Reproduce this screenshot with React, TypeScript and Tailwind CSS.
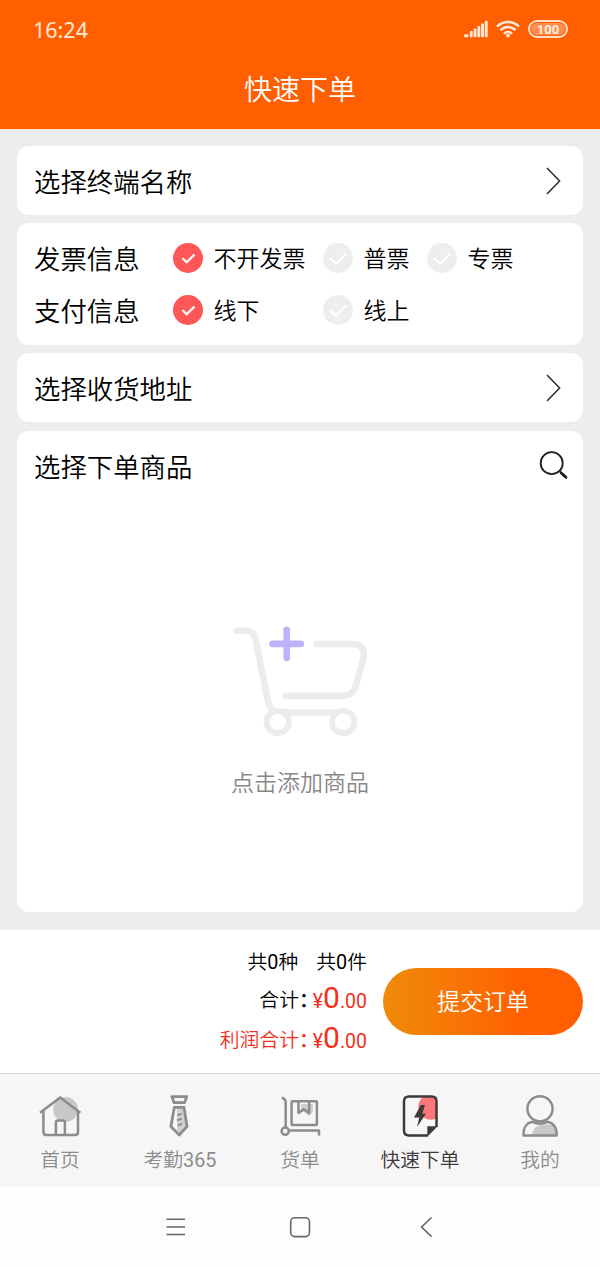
import React from 'react';

const CheckDot: React.FC<{ checked?: boolean }> = ({ checked }) => (
  <svg width="30" height="30" viewBox="0 0 30 30" fill="none" className="shrink-0">
    <circle cx="15" cy="15" r="15" fill={checked ? '#ff5757' : '#eeeeee'} />
    <path d={checked ? 'M9.4 15 L13.6 19.2 L21.4 11.6' : 'M6.8 15.2 L13 20.6 L23.2 10.4'} stroke="#fff" strokeWidth={checked ? 2.2 : 2} />
  </svg>
);

const Option: React.FC<{ label: string; checked?: boolean; className?: string }> = ({ label, checked, className }) => (
  <div className={`flex items-center gap-[10.6px] ${className ?? ''}`}>
    <CheckDot checked={checked} />
    <span className="pt-[3px] text-[23px] leading-none whitespace-nowrap">{label}</span>
  </div>
);

const ChevronRight: React.FC = () => (
  <svg width="16" height="28" viewBox="0 0 16 28" fill="none" stroke="#333" strokeWidth="1.6">
    <path d="M1 1 L13.6 14 L1 27" />
  </svg>
);

const SelectRow: React.FC<{ label: string }> = ({ label }) => (
  <div className="flex h-[69px] shrink-0 items-center justify-between rounded-xl bg-white pr-[21px] pl-[17px]">
    <span className="pt-[6px] text-[26.4px] leading-none">{label}</span>
    <ChevronRight />
  </div>
);

const StatusBar: React.FC = () => (
  <div className="flex h-[58px] items-center justify-between pr-8 pl-[33px] text-[#ffe9d6]">
    <span className="pt-[2px] font-['Noto_Sans'] text-[21.5px] leading-none font-normal">16:24</span>
    <div className="flex items-center gap-2">
      <svg width="24" height="18" viewBox="0 0 24 18" fill="currentColor">
        <rect x="0" y="14.2" width="4.4" height="3" rx="1" />
        <rect x="5.8" y="11" width="2.9" height="6.2" rx="1" />
        <rect x="9.6" y="8.4" width="2.9" height="8.8" rx="1" />
        <rect x="13.4" y="6" width="2.9" height="11.2" rx="1" />
        <rect x="17.1" y="3.4" width="2.9" height="13.8" rx="1" />
        <rect x="20.8" y="0.8" width="2.9" height="16.4" rx="1" />
      </svg>
      <svg width="24" height="18" viewBox="0 0 24 18" fill="none" stroke="currentColor" strokeWidth="2.5">
        <path d="M1 6.6 C7.2 .4 16.8 .4 23 6.6" />
        <path d="M4.4 10.2 C8.7 6 15.3 6 19.6 10.2" />
        <path d="M7.9 13.6 C10.2 11.4 13.8 11.4 16.1 13.6" />
        <circle cx="12" cy="15.6" r="2" fill="currentColor" stroke="none" />
      </svg>
      <div className="flex h-[18px] w-10 items-center justify-center rounded-full border-2 border-[#ffe0c4] p-px">
        <div className="flex h-full w-full items-center justify-center rounded-full bg-[#ff8c4d] font-['Roboto'] text-[13px] leading-none font-bold text-[#fff3e8]">
          100
        </div>
      </div>
    </div>
  </div>
);

const CartIcon: React.FC = () => (
  <svg width="140" height="116" viewBox="0 0 140 116" fill="none" stroke="#ececec" strokeWidth="6.6" strokeLinecap="round" strokeLinejoin="round">
    <path d="M6.8 8.7 H15 C22 8.7 24.3 12 25.4 17 L37.5 77 C39.3 86 42 90.5 48 90.5 H113" />
    <path d="M86.5 22 H122 C132 22 135.2 27.5 133.3 36 L127 60 C124.4 70 121 73.9 112 73.9 H56" />
    <circle cx="47.8" cy="100" r="11.2" fill="#fff" strokeWidth="5.8" />
    <circle cx="113.3" cy="100" r="11.2" fill="#fff" strokeWidth="5.8" />
    <path d="M42.5 21.9 H70.8 M56.7 7.7 V36" stroke="#bfb2fb" />
  </svg>
);

const HomeIcon = (
  <>
    <circle cx="29.6" cy="17.5" r="12.5" fill="#c8c8c8" stroke="none" />
    <path d="M4 20.8 L24.2 5.4 L44.3 20.8" />
    <path d="M7.4 19 V40 Q7.4 43 10.4 43 H39 Q42 43 42 40 V19" />
    <path d="M19.9 43 V30.5 Q19.9 28.6 22 28.6 H26.6 Q28.9 28.6 28.9 30.5 V43" />
  </>
);

const TieIcon = (
  <>
    <path d="M21 16 H27.5 L30.5 34.5 L24 42 L21 38 Z" fill="#d0d0d0" stroke="none" />
    <path d="M15.9 4.6 H30.7 L28.6 10.6 H18 Z" strokeWidth="2.8" />
    <path d="M18.3 15.4 H28 L31 34.6 L23.2 43 L14.9 34.6 Z" strokeWidth="2.8" />
    <path d="M21.2 23.4 L25.6 21.8 M20.9 28.4 L25.6 26.8 M22 33.4 L26 32" strokeWidth="2" />
  </>
);

const DollyIcon = (
  <>
    <path d="M25 12 H37 V20 L33 24 L25 18 Z" fill="#d0d0d0" stroke="none" />
    <path d="M5.8 5.8 C8.8 6.5 9.7 8 9.7 11 V35.5" />
    <circle cx="9.2" cy="39.2" r="3.6" />
    <path d="M13 38.6 H43 V43.5" />
    <rect x="15.6" y="9.3" width="25.3" height="23.8" rx="1" />
    <path d="M22.5 9.5 V21 L27.8 17.3 L33.2 21 V9.5" />
  </>
);

const OrderIcon = (
  <>
    <clipPath id="sheet">
      <rect x="8" y="4.3" width="32.3" height="39.4" rx="5" />
    </clipPath>
    <circle cx="35" cy="15" r="12.7" fill="#fd7778" stroke="none" clipPath="url(#sheet)" />
    <path d="M32 43.6 H13 Q8 43.6 8 38.6 V9.4 Q8 4.4 13 4.4 H35.5 Q40.5 4.4 40.5 9.4 V35" />
    <path d="M31.3 44.8 V34.3 H41.7 Z" fill="currentColor" stroke="none" />
    <path d="M24.8 13 H29 L26.3 21.7 H30 L21 35 L23.3 25.5 H18 Z" fill="currentColor" stroke="none" />
  </>
);

const UserIcon = (
  <>
    <path d="M16 43.5 C16 35 24 31 37 33 Q40 37 40.5 43.5 Z" fill="#c8c8c8" stroke="none" />
    <circle cx="24" cy="16.8" r="12.6" />
    <path d="M16.5 29.8 C10 31 7.5 35 7.5 43.4 H40.7 C40.7 35 38 31 31.5 29.8 C27 32 21 32 16.5 29.8 Z" />
  </>
);

const tabs = [
  { label: '首页', icon: HomeIcon },
  { label: '考勤', digits: '365', icon: TieIcon },
  { label: '货单', icon: DollyIcon },
  { label: '快速下单', icon: OrderIcon, active: true },
  { label: '我的', icon: UserIcon },
];

const TabBar: React.FC = () => (
  <nav className="flex h-[114px] shrink-0 border-t border-[#d9d9d9] bg-[#f6f6f6]">
    {tabs.map((tab) => (
      <div
        key={tab.label}
        className={`flex w-[120px] flex-col items-center pt-[18px] ${tab.active ? 'text-[#3d3a3b]' : 'text-[#8c8c8c]'}`}
      >
        <svg width="48" height="48" viewBox="0 0 48 48" fill="none" stroke="currentColor" strokeWidth="2.5" strokeLinejoin="round">
          {tab.icon}
        </svg>
        <span className="mt-[11px] text-[19.8px] leading-none whitespace-nowrap">
          {tab.label}
          {tab.digits && <span className="font-normal">{tab.digits}</span>}
        </span>
      </div>
    ))}
  </nav>
);

const Price: React.FC = () => (
  <span className="pb-[7px] font-['Roboto'] leading-none font-normal text-[#f4301c]">
    <span className="text-[19.5px]">¥</span>
    <span className="text-[30px]">0</span>
    <span className="text-[19.5px]">.00</span>
  </span>
);

const TotalRow: React.FC<{ label: string; className?: string }> = ({ label, className }) => (
  <div className={`flex items-center ${className ?? ''}`}>
    <span>{label}</span>
    <span className="mr-1 font-medium [font-feature-settings:'halt']">：</span>
    <Price />
  </div>
);

const App: React.FC = () => {
  return (
    <div className="flex h-[1267px] w-[600px] flex-col bg-[#ededed] font-['Roboto','Noto_Sans_CJK_SC',sans-serif] font-[350] text-black">
      <header className="h-[129px] shrink-0 bg-[#ff5f00]">
        <StatusBar />
        <h1 className="mt-[19px] text-center text-[28px] leading-none text-white">快速下单</h1>
      </header>
      <div className="h-px shrink-0 bg-[#ffe5d0]" />

      <main className="flex flex-1 flex-col px-[17px] pt-4">
        <SelectRow label="选择终端名称" />

        <section className="mt-2 flex h-[122px] shrink-0 flex-col rounded-xl bg-white pt-[9px] pl-[17px]">
          <div className="flex h-[52px] items-center">
            <span className="w-[139px] pt-[5px] text-[26.4px] leading-none">发票信息</span>
            <Option label="不开发票" checked className="w-[150px]" />
            <Option label="普票" className="w-[104px]" />
            <Option label="专票" />
          </div>
          <div className="flex h-[52px] items-center">
            <span className="w-[139px] pt-[5px] text-[26.4px] leading-none">支付信息</span>
            <Option label="线下" checked className="w-[150px]" />
            <Option label="线上" />
          </div>
        </section>

        <div className="mt-2 flex flex-col">
          <SelectRow label="选择收货地址" />
        </div>

        <section className="mt-[9px] h-[481px] shrink-0 rounded-xl bg-white">
          <div className="flex h-[69px] items-center justify-between pr-[15px] pl-[17px]">
            <span className="pt-[6px] text-[26.4px] leading-none">选择下单商品</span>
            <svg width="29" height="29" viewBox="0 0 29 29" fill="none" stroke="#221e1f">
              <circle cx="12.7" cy="12.2" r="11" strokeWidth="1.8" />
              <path d="M20.5 20 L22.5 22" strokeWidth="1.6" />
              <path d="M22 21.8 L27 26.4" strokeWidth="2.8" strokeLinecap="round" />
            </svg>
          </div>
          <div className="flex flex-col items-center pt-[122px]">
            <CartIcon />
            <p className="mt-[34px] text-[23px] leading-none text-[#888]">点击添加商品</p>
          </div>
        </section>
      </main>

      <footer className="flex h-[143px] shrink-0 items-center justify-end bg-white pr-[17px]">
        <div className="flex flex-col items-end text-[19.8px]">
          <div className="flex h-[37px] items-center gap-[18px] pt-[3px]">
            <span>
              共<span className="font-normal">0</span>种
            </span>
            <span>
              共<span className="font-normal">0</span>件
            </span>
          </div>
          <TotalRow label="合计" className="h-10 pt-[2px]" />
          <TotalRow label="利润合计" className="h-10 pt-[2px] text-[#f4301c]" />
        </div>
        <button className="ml-4 h-[67px] w-[200px] rounded-full bg-linear-to-r from-[#ef8a0a] to-[#ff5f00] to-70% pt-1 text-[23px] text-white">
          提交订单
        </button>
      </footer>

      <TabBar />

      {/* Android system navigation */}
      <div className="h-20 shrink-0 bg-[#fdfdfd]">
        <svg width="600" height="80" viewBox="0 0 600 80" fill="none" stroke="#666" strokeWidth="1.6">
          <path d="M166.5 32.3 H185 M166.5 40 H185 M166.5 47.5 H185" />
          <rect x="290.7" y="30.8" width="18.8" height="18.8" rx="4" />
          <path d="M431.5 30.5 L421.6 40 L431.5 49.6" />
        </svg>
      </div>
    </div>
  );
};

export default App;
